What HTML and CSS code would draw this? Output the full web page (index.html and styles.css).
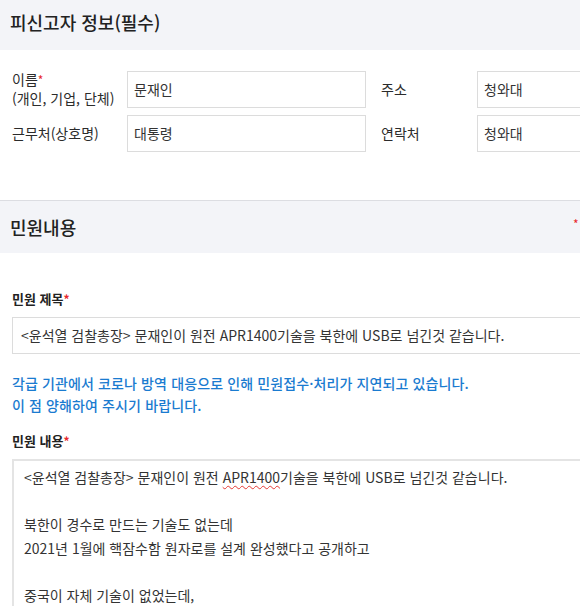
FILE: index.html
```html
<!DOCTYPE html>
<html lang="ko">
<head>
    <meta charset="UTF-8">
    <meta name="viewport" content="width=device-width, initial-scale=1.0">
    <title>민원신청</title>
    <link rel="stylesheet" href="styles.css">
</head>
<body>
    <div class="page">
        <div class="sec-head">
            <h3>피신고자 정보(필수)</h3>
        </div>
        <div class="person">
            <div class="row">
                <div class="lbl">이름<span class="req">*</span><br>(개인, 기업, 단체)</div>
                <div class="box w1">문재인</div>
                <div class="lbl lbl2">주소</div>
                <div class="box w2">청와대</div>
            </div>
            <div class="row">
                <div class="lbl">근무처(상호명)</div>
                <div class="box w1">대통령</div>
                <div class="lbl lbl2">연락처</div>
                <div class="box w2">청와대</div>
            </div>
        </div>

        <div class="sec-head sec-line">
            <h3>민원내용</h3>
            <span class="req star">*</span>
        </div>
        <div class="content">
            <h4>민원 제목<span class="req">*</span></h4>
            <div class="box full">&lt;윤석열 검찰총장&gt; 문재인이 원전 APR1400기술을 북한에 USB로 넘긴것 같습니다.</div>

            <p class="notice">각급 기관에서 코로나 방역 대응으로 인해 민원접수·처리가 지연되고 있습니다.<br>이 점 양해하여 주시기 바랍니다.</p>

            <h4>민원 내용<span class="req">*</span></h4>
            <div class="box area">
                <p>&lt;윤석열 검찰총장&gt; 문재인이 원전 <span class="typo">APR1400</span>기술을 북한에 USB로 넘긴것 같습니다.</p>
                <p>&nbsp;</p>
                <p>북한이 경수로 만드는 기술도 없는데</p>
                <p>2021년 1월에 핵잠수함 원자로를 설계 완성했다고 공개하고</p>
                <p>&nbsp;</p>
                <p>중국이 자체 기술이 없었는데,</p>
                <p>&nbsp;</p>
            </div>
        </div>
    </div>
</body>
</html>
```

FILE: styles.css
```css
html, body {
    margin: 0;
    padding: 0;
    overflow: hidden;
}
body {
    font-family: "Noto Sans CJK KR", "Noto Sans", sans-serif;
    color: #333;
    background: #fff;
}
.page {
    width: 640px;
}
h3, h4, p {
    margin: 0;
}
.req {
    color: #e8282b;
    font-size: 12px;
    vertical-align: top;
}

/* grey title bands */
.sec-head {
    position: relative;
    height: 50px;
    background: #f3f4f8;
    padding-left: 10px;
}
.sec-head h3 {
    font-size: 18px;
    font-weight: 500;
    line-height: 44px;
    color: #222;
}
.sec-line {
    height: 52px;
    border-top: 1px solid #dcdde2;
}
.sec-line h3 {
    line-height: 52px;
}
.star {
    position: absolute;
    left: 573px;
    top: 14px;
}

/* 피신고자 rows */
.person {
    padding: 20px 0 48px 12px;
}
.row {
    display: flex;
    align-items: center;
    margin-bottom: 7px;
}
.row:last-child {
    margin-bottom: 0;
}
.lbl {
    width: 115px;
    font-size: 14px;
    line-height: 19px;
    color: #2b2b2b;
}
.lbl2 {
    width: 96px;
    padding-left: 15px;
}
.box {
    box-sizing: border-box;
    border: 1px solid #dcdcdc;
    font-size: 14px;
    color: #333;
    background: #fff;
}
.w1, .w2 {
    height: 37px;
    line-height: 35px;
    padding-left: 6px;
}
.w1 {
    width: 239px;
}
.w2 {
    width: 160px;
}

/* 민원 내용 */
.content {
    padding: 36px 0 0 12px;
}
.content h4 {
    font-size: 13px;
    font-weight: 700;
    line-height: 20px;
    margin-bottom: 8px;
    color: #222;
}
.full {
    height: 37px;
    line-height: 35px;
    padding-left: 8px;
    width: 620px;
}
.notice {
    margin: 18px 0 15px;
    font-size: 14px;
    font-weight: 500;
    letter-spacing: 0.12px;
    line-height: 22px;
    color: #1a7bd0;
}
.area {
    width: 620px;
    padding: 5px 10px;
    border-width: 2px 1px 1px 2px;
    border-color: #e4e4e4;
}
.area p {
    line-height: 23.5px;
    color: #333;
}
.typo {
    text-decoration: underline wavy #e53935;
    text-decoration-thickness: 1px;
    text-underline-offset: 2px;
}
```
